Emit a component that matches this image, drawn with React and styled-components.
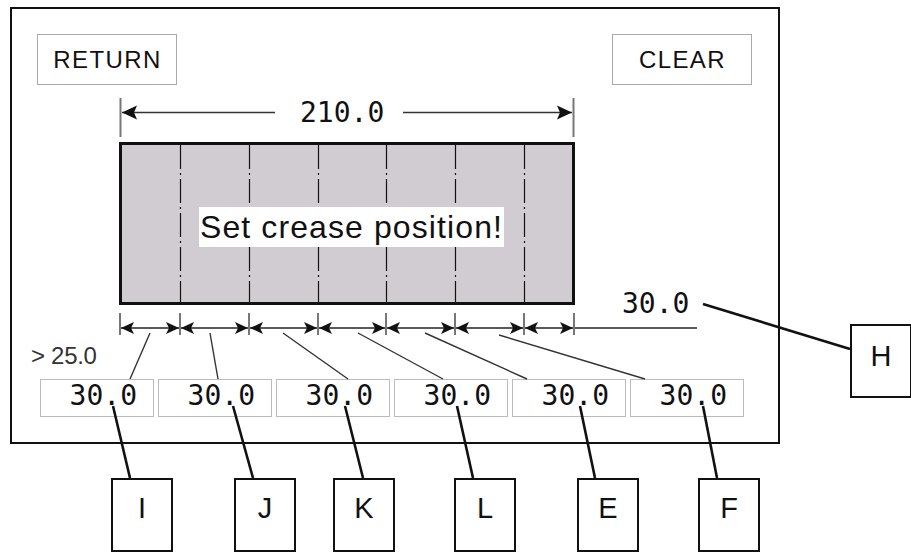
import React from "react";
import styled, { createGlobalStyle } from "styled-components";

const GlobalStyle = createGlobalStyle`
    html, body {
        margin: 0;
        padding: 0;
        background: #fff;
    }
`;

const mono = `"DejaVu Sans Mono", "Liberation Mono", monospace`;
const sans = `"Liberation Sans", Arial, sans-serif`;

const Canvas = styled.div`
    position: relative;
    width: 911px;
    height: 553px;
    overflow: hidden;
    background: #fff;
    font-family: ${sans};
    color: #111;
`;

const Panel = styled.div`
    box-sizing: border-box;
    width: 770px;
    height: 437px;
    margin: 7px 0 0 10px;
    padding-top: 25px;
    border: 2px solid #111;
    display: flex;
    flex-direction: column;
`;

const TopBar = styled.div`
    display: flex;
    justify-content: space-between;
    padding: 0 26px 0 25px;
`;

const Button = styled.button`
    box-sizing: border-box;
    width: 140px;
    height: 51px;
    padding: 0;
    border: 1px solid #aaa;
    background: #fff;
    font-family: ${sans};
    font-size: 24px;
    letter-spacing: 1.4px;
    text-indent: 1px;
    color: #111;
`;

const Drawing = styled.div`
    margin-left: 107px;
    display: flex;
    flex-direction: column;
`;

const TopDim = styled.div`
    margin-top: 13px;
    height: 44px;
    width: 456px;
    display: flex;
    align-items: flex-start;
`;

const DimText = styled.span`
    box-sizing: border-box;
    width: ${(p) => p.$width}px;
    padding-left: ${(p) => p.$pad}px;
    margin-top: 1px;
    font-family: ${mono};
    font-size: 28px;
    line-height: 28px;
    white-space: nowrap;
    color: #111;
`;

const SheetRow = styled.div`
    display: flex;
    align-items: flex-end;
`;

const Sheet = styled.div`
    position: relative;
    box-sizing: border-box;
    width: 456px;
    height: 163px;
    border: 3px solid #111;
    background: #d1ccd1;
    display: flex;
    align-items: center;
    justify-content: center;
`;

const CreaseLayer = styled.svg`
    position: absolute;
    inset: 0;
`;

const Notice = styled.div`
    position: relative;
    margin: 7px 0 0 9px;
    height: 40px;
    padding: 0 1px;
    background: #fff;
    font-family: ${sans};
    font-size: 32px;
    line-height: 40px;
    letter-spacing: 1.1px;
    white-space: nowrap;
    color: #111;
`;

const SideValue = styled.span`
    margin: 0 0 -13px 47px;
    font-family: ${mono};
    font-size: 28px;
    line-height: 28px;
    color: #111;
`;

const DimRow = styled.div`
    margin-top: 8px;
    height: 22px;
`;

const Limit = styled.div`
    margin: 9px 0 0 19px;
    font-family: ${sans};
    font-size: 24px;
    line-height: 24px;
    letter-spacing: -0.3px;
    color: #333;
`;

const Boxes = styled.div`
    margin: 11px 0 0 28px;
    display: flex;
    gap: 4px;
`;

const ValueBox = styled.div`
    box-sizing: border-box;
    width: 114px;
    height: 38px;
    padding: 2px 16px 0 0;
    border: 1px solid #bbb;
    text-align: right;
    font-family: ${mono};
    font-size: 28px;
    line-height: 28px;
    color: #111;
`;

const Leaders = styled.svg`
    position: absolute;
    inset: 0;
    pointer-events: none;
`;

const Callout = styled.div`
    position: absolute;
    left: ${(p) => p.$x}px;
    top: ${(p) => p.$y}px;
    box-sizing: border-box;
    width: 62px;
    height: 74px;
    padding-top: ${(p) => p.$pad}px;
    border: 2px solid #111;
    background: #fff;
    display: flex;
    justify-content: center;
    align-items: flex-start;
    font-family: ${sans};
    font-size: 29px;
    line-height: 28px;
    color: #111;
`;

// notched arrowhead with its tip at (x, y), dir -1 points left, 1 points right
const head = (x, y, dir, len, half) => {
    const b = x - dir * len;
    const n = x - dir * (len - 3);
    return `M${x} ${y} L${b} ${y - half} L${n} ${y} L${b} ${y + half} Z`;
};

const creases = [58, 127, 196, 264, 333, 402];
const ticks = [1, 61, 130, 199, 267, 336, 405, 455];

const thinLeaders = [
    [150, 333, 130, 379],
    [210, 333, 218, 379],
    [283, 333, 348, 379],
    [358, 333, 443, 379],
    [425, 333, 527, 379],
    [499, 335, 645, 379],
];

const thickLeaders = [
    [113, 406, 130, 478],
    [233, 406, 253, 478],
    [345, 406, 363, 478],
    [457, 406, 473, 478],
    [580, 406, 595, 478],
    [703, 406, 717, 478],
    [703, 304, 850, 349],
];

const callouts = [
    { label: "I", x: 111, y: 478 },
    { label: "J", x: 234, y: 478 },
    { label: "K", x: 333, y: 478 },
    { label: "L", x: 454, y: 478 },
    { label: "E", x: 577, y: 478 },
    { label: "F", x: 698, y: 478 },
];

const App = () => (
    <Canvas>
        <GlobalStyle />
        <Panel>
            <TopBar>
                <Button>RETURN</Button>
                <Button>CLEAR</Button>
            </TopBar>

            <Drawing>
                <TopDim>
                    <svg width="156" height="40">
                        <line x1="1.5" y1="0" x2="1.5" y2="39" stroke="#777" strokeWidth="2" />
                        <line x1="3" y1="14.5" x2="156" y2="14.5" stroke="#333" strokeWidth="1.5" />
                        <path d={head(3, 14.5, -1, 15, 7)} fill="#111" />
                    </svg>
                    <DimText $width={128} $pad={25}>210.0</DimText>
                    <svg width="172" height="40">
                        <line x1="0" y1="14.5" x2="169" y2="14.5" stroke="#333" strokeWidth="1.5" />
                        <path d={head(169, 14.5, 1, 15, 7)} fill="#111" />
                        <line x1="170.5" y1="0" x2="170.5" y2="39" stroke="#777" strokeWidth="2" />
                    </svg>
                </TopDim>

                <SheetRow>
                    <Sheet>
                        <CreaseLayer width="450" height="157">
                            {creases.map((x) => (
                                <line
                                    key={x}
                                    x1={x + 0.5}
                                    y1="0"
                                    x2={x + 0.5}
                                    y2="157"
                                    stroke="#111"
                                    strokeWidth="1.2"
                                    strokeDasharray="24 4 2 4"
                                />
                            ))}
                        </CreaseLayer>
                        <Notice>Set crease position!</Notice>
                    </Sheet>
                    <SideValue>30.0</SideValue>
                </SheetRow>

                <DimRow>
                    <svg width="580" height="22">
                        <line x1="1" y1="15" x2="578" y2="15" stroke="#222" strokeWidth="1.5" />
                        {ticks.map((x) => (
                            <line key={x} x1={x} y1="0" x2={x} y2="22" stroke="#777" strokeWidth="2" />
                        ))}
                        {ticks.slice(0, -1).map((x, i) => (
                            <g key={x} fill="#111">
                                <path d={head(x + 1, 15, -1, 13, 6)} />
                                <path d={head(ticks[i + 1] - 1, 15, 1, 13, 6)} />
                            </g>
                        ))}
                    </svg>
                </DimRow>
            </Drawing>

            <Limit>&gt; 25.0</Limit>

            <Boxes>
                {[0, 1, 2, 3, 4, 5].map((i) => (
                    <ValueBox key={i}>30.0</ValueBox>
                ))}
            </Boxes>
        </Panel>

        <Leaders width="911" height="553">
            {thinLeaders.map(([x1, y1, x2, y2]) => (
                <line key={x1} x1={x1} y1={y1} x2={x2} y2={y2} stroke="#333" strokeWidth="1.4" />
            ))}
            {thickLeaders.map(([x1, y1, x2, y2]) => (
                <line key={`${x1}-${y1}`} x1={x1} y1={y1} x2={x2} y2={y2} stroke="#111" strokeWidth="2.6" />
            ))}
        </Leaders>

        {callouts.map((c) => (
            <Callout key={c.label} $x={c.x} $y={c.y} $pad={14}>
                {c.label}
            </Callout>
        ))}
        <Callout $x={850} $y={324} $pad={16}>
            H
        </Callout>
    </Canvas>
);

export default App;
